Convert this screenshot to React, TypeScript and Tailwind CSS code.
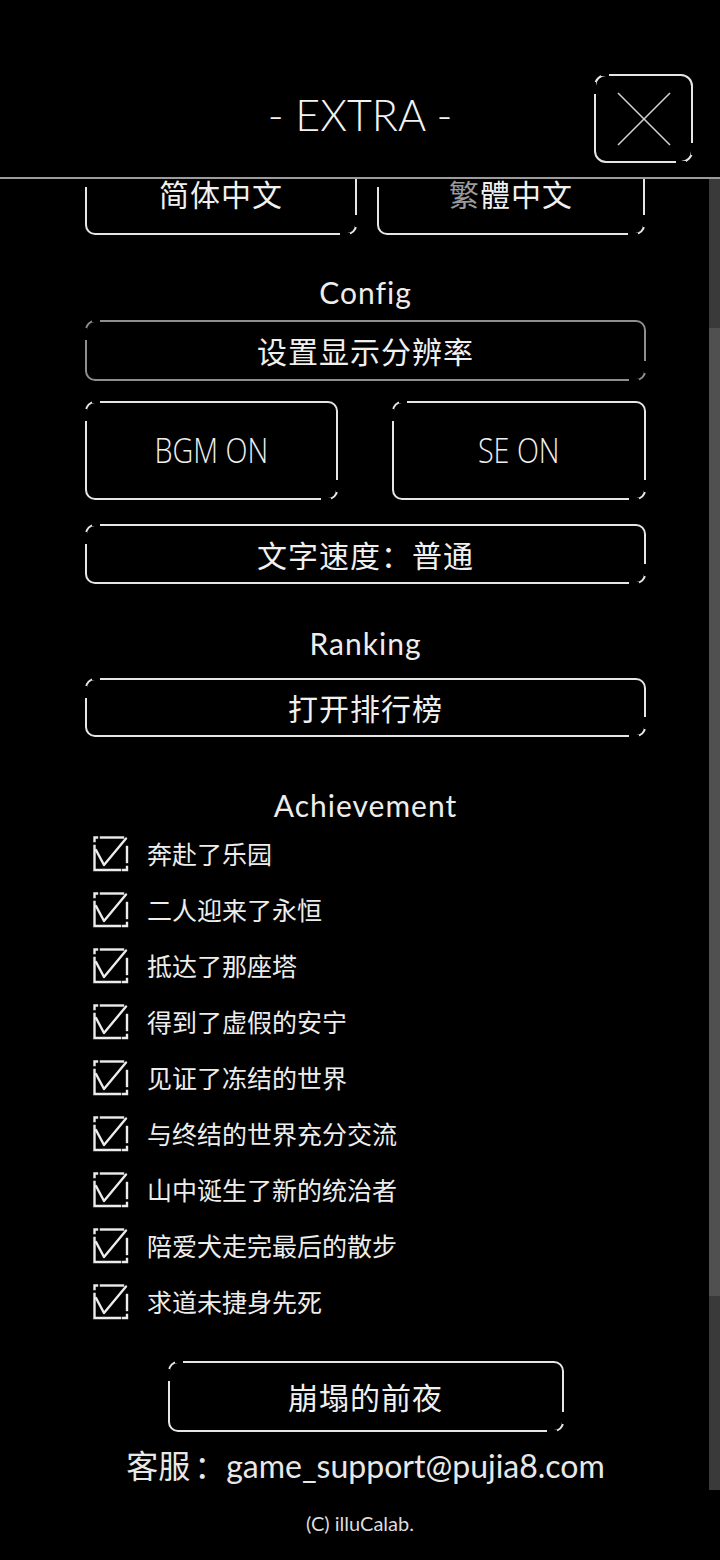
import type React from "react"

const achievements = [
  "奔赴了乐园",
  "二人迎来了永恒",
  "抵达了那座塔",
  "得到了虚假的安宁",
  "见证了冻结的世界",
  "与终结的世界充分交流",
  "山中诞生了新的统治者",
  "陪爱犬走完最后的散步",
  "求道未捷身先死",
]

const cjk = "font-['Noto_Sans_CJK_SC',sans-serif]"
const latin = "font-['Lato','Noto_Sans_CJK_SC',sans-serif]"

// Rounded outline with the two broken corners (top-left, bottom-right)
function Frame({
  className = "",
  dim = false,
  children,
}: {
  className?: string
  dim?: boolean
  children?: React.ReactNode
}) {
  return (
    <div
      className={`relative flex items-center justify-center rounded-[10px] border-2 ${
        dim ? "border-[#8e8e8e]" : "border-[#e6e6e6]"
      } ${className}`}
    >
      <span className="absolute -top-[2px] left-[5px] h-[2px] w-[8px] bg-black" />
      <span className="absolute -left-[2px] top-[6px] h-[12px] w-[2px] bg-black" />
      <span className="absolute -bottom-[2px] right-[5px] h-[2px] w-[10px] bg-black" />
      <span className="absolute -right-[2px] bottom-[6px] h-[12px] w-[2px] bg-black" />
      {children}
    </div>
  )
}

function CheckIcon() {
  return (
    <svg width="36" height="36" viewBox="0 0 36 36" fill="none" stroke="#ececec" strokeWidth="2.4" strokeLinecap="square">
      <path d="M1.5 5 V1.5 H4" />
      <path d="M8 1.5 H30" />
      <path d="M1.5 10 V34 H27" />
      <path d="M30 34 H34 V31" />
      <path d="M34 26 V11" />
      <path d="M3 14 L11 29 L33 2.5" strokeLinecap="round" strokeLinejoin="round" />
    </svg>
  )
}

function Label({ text, className = "" }: { text: string; className?: string }) {
  return (
    <div className={`flex h-[40px] items-center justify-center ${latin} text-[30px] tracking-[1px] text-[#ededed] ${className}`}>
      {text}
    </div>
  )
}

export default function App() {
  return (
    <div className="flex h-[1560px] w-[720px] flex-col overflow-hidden bg-black text-[#f0f0f0]">
      {/* header */}
      <header className="grid h-[179px] shrink-0 grid-cols-[1fr_auto_1fr] items-center border-b-2 border-[#9c9c9c] pt-[52px]">
        <div />
        <h1 className={`${latin} text-[43px] font-light leading-none text-[#f2f2f2]`}>- EXTRA -</h1>
        <div className="flex justify-end pr-[27px] pt-[8px]">
          <Frame className="h-[89px] w-[99px] rounded-[12px]">
            <svg width="54" height="54" viewBox="0 0 54 54" stroke="#cfcfcf" strokeWidth="1.6">
              <line x1="1" y1="1" x2="53" y2="53" />
              <line x1="53" y1="1" x2="1" y2="53" />
            </svg>
          </Frame>
        </div>
      </header>

      {/* scroll area */}
      <div className="flex h-[1311px] shrink-0">
        <div className="h-full w-[709px] overflow-hidden">
          <div className="ml-[85px] w-[561px]">
            <div className="-mt-[12px] flex gap-[20px]">
              <Frame className={`h-[68px] w-[272px] ${cjk} text-[30px] tracking-[1px]`}>
                <span className="-mt-[16px]">简体中文</span>
              </Frame>
              <Frame className={`h-[68px] w-[268px] ${cjk} text-[30px] tracking-[1px]`}>
                <span className="-mt-[16px]">
                  <span className="text-[#9a9a9a]">繁</span>體中文
                </span>
              </Frame>
            </div>

            <Label text="Config" className="mt-[37px]" />
            <Frame dim className={`mt-[8px] h-[61px] ${cjk} text-[30px] tracking-[1px]`}>
              设置显示分辨率
            </Frame>

            <div className="mt-[20px] flex justify-between">
              <Frame className="h-[99px] w-[253px]">
                <span className="inline-block scale-x-[0.82] font-['Open_Sans',sans-serif] text-[35px] font-light">BGM ON</span>
              </Frame>
              <Frame className="h-[99px] w-[254px]">
                <span className="inline-block scale-x-[0.82] font-['Open_Sans',sans-serif] text-[35px] font-light">SE ON</span>
              </Frame>
            </div>

            <Frame className={`mt-[24px] h-[60px] ${cjk} text-[30px] tracking-[1px]`}>文字速度：普通</Frame>

            <Label text="Ranking" className="mt-[39px]" />
            <Frame className={`mt-[15px] h-[59px] ${cjk} text-[30px] tracking-[1px]`}>打开排行榜</Frame>

            <Label text="Achievement" className="mt-[48px]" />
            <ul className="mt-[1px]">
              {achievements.map((a) => (
                <li key={a} className="flex h-[56px] items-center gap-[18px] pl-[8px]">
                  <CheckIcon />
                  <span className={`${cjk} text-[25px] text-[#ededed]`}>{a}</span>
                </li>
              ))}
            </ul>

            <Frame className={`mx-auto mt-[31px] h-[71px] w-[396px] ${cjk} text-[30px] tracking-[1px]`}>
              崩塌的前夜
            </Frame>

            <div className={`mt-[14px] flex h-[40px] items-center justify-center whitespace-nowrap ${latin} text-[32px] text-[#e8e8e8]`}>
              客服<span className="pl-[4px]">：</span>game_support@pujia8.com
            </div>
          </div>
        </div>

        {/* scrollbar */}
        <div className="flex h-full w-[11px] flex-col bg-[#3a3a3a]">
          <div className="h-[149px]" />
          <div className="h-[968px] bg-[#505050]" />
        </div>
      </div>

      <footer className={`flex h-[70px] items-center justify-center pb-[4px] ${latin} text-[20px] text-[#dcdcdc]`}>
        (C) illuCalab.
      </footer>
    </div>
  )
}
